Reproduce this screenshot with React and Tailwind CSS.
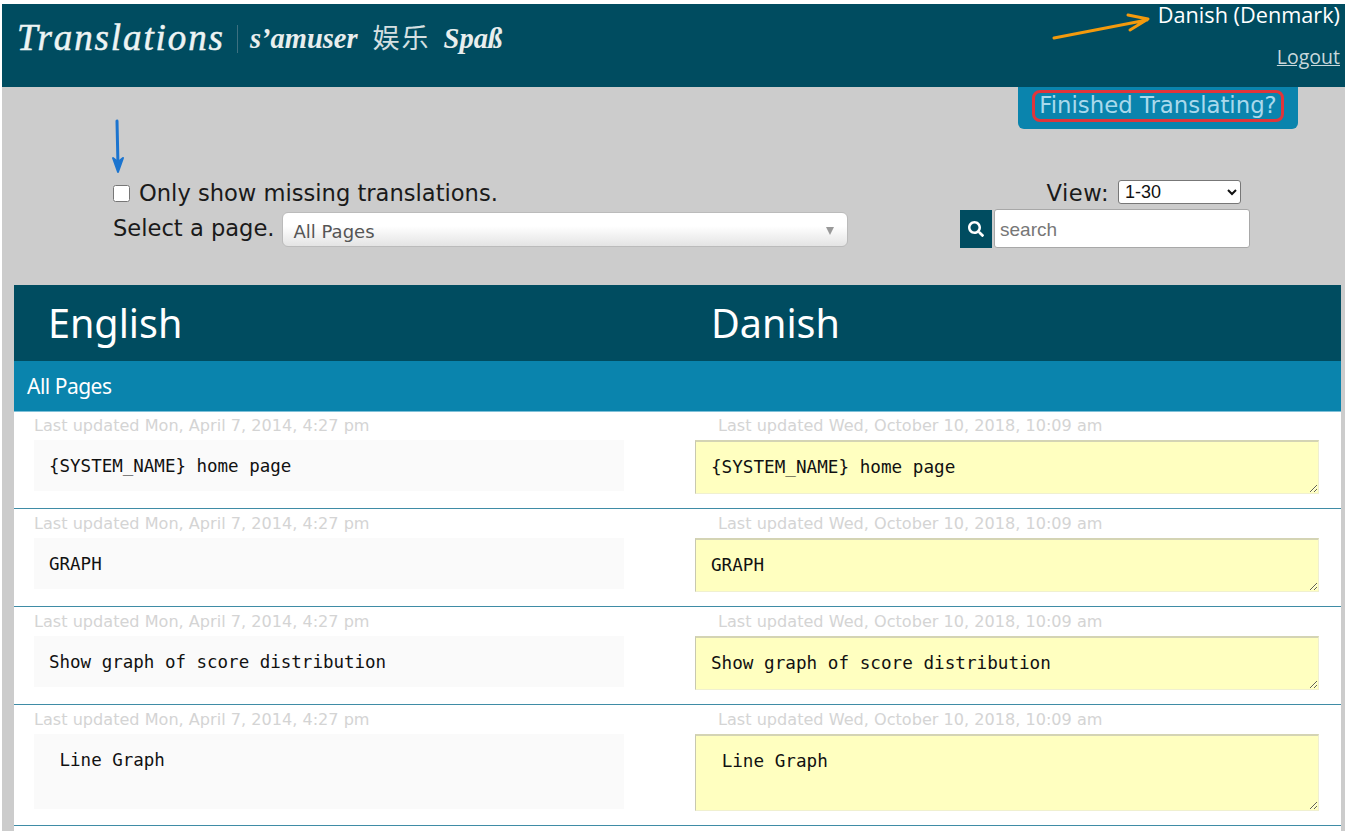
import React from 'react';
import { FaSearch } from 'react-icons/fa';

const OLD_DATE = 'Last updated Mon, April 7, 2014, 4:27 pm';
const NEW_DATE = 'Last updated Wed, October 10, 2018, 10:09 am';

const rows = [
  { text: '{SYSTEM_NAME} home page' },
  { text: 'GRAPH' },
  { text: 'Show graph of score distribution' },
  { text: ' Line Graph', tall: true },
];

const Row = ({ text, tall }) => (
  <div className={`grid grid-cols-[681px_1fr] border-b border-[#3f8ca6] bg-white ${tall ? 'h-[121px]' : 'h-[98px]'}`}>
    <div className="pl-[20px] pt-[6px]">
      <div className="font-['DejaVu_Sans'] text-[16.1px] leading-[18px] text-[#d4d4d4]">{OLD_DATE}</div>
      <div className={`mt-[5px] w-[590px] bg-[#fafafa] pl-[15px] pt-[14px] ${tall ? 'h-[75px]' : 'h-[51px]'}`}>
        <pre className="font-['DejaVu_Sans_Mono'] text-[17.5px] leading-[24px] text-[#111]">{text}</pre>
      </div>
    </div>
    <div className="pt-[6px]">
      <div className="pl-[23px] font-['DejaVu_Sans'] text-[16.1px] leading-[18px] text-[#d4d4d4]">{NEW_DATE}</div>
      <textarea
        readOnly
        value={text}
        className={`mt-[5px] block w-[624px] border border-[#f0f0d0] border-t-2 border-t-[#d4d4b4] border-l-[#c8c8b0] bg-[#ffffc0] px-[15px] pt-[13px] font-['DejaVu_Sans_Mono'] text-[17.65px] leading-[24px] text-[#111] outline-none ${tall ? 'h-[77px]' : 'h-[54px]'}`}
      />
    </div>
  </div>
);

export default function App() {
  return (
    <div className="relative h-[831px] w-[1353px] overflow-hidden bg-white pl-[2px] pr-[8px] pt-[4px]">
      <div className="h-[827px] bg-[#cccccc]">
        {/* top bar */}
        <header className="flex h-[83px] justify-between bg-[#004c60] pl-[15px] pr-[5px] text-white">
          <div className="flex items-start pt-[11px] font-['Liberation_Serif','Noto_Sans_CJK_SC',serif]">
            <span className="text-[37px] italic leading-[46px] tracking-[1.9px] text-[#eef4f4] [-webkit-text-stroke:0.5px_#eef4f4]">Translations</span>
            <span className="ml-[12px] mt-[10px] h-[28px] w-px bg-[#3d7080]" />
            <span className="ml-[12px] mt-[4px] text-[28.5px] font-bold italic leading-[40px] text-[#e8eeee]">s’amuser</span>
            <span className="ml-[15px] mt-[4px] text-[27px] leading-[40px] tracking-[2px] text-[#d5e0e2]">娱乐</span>
            <span className="ml-[13px] mt-[4px] text-[28.5px] font-bold italic leading-[40px] text-[#e8eeee]">Spaß</span>
          </div>
          <div className="flex flex-col items-end font-['Open_Sans']">
            <span className="text-[21.7px] leading-[22px]">Danish (Denmark)</span>
            <a className="mt-[20px] text-[19.5px] leading-[22px] text-[#c8d8dc] underline">Logout</a>
          </div>
        </header>

        <div className="flex justify-end pr-[47px]">
          <div className="h-[42px] w-[280px] rounded-b-[6px] bg-[#0a84ad] px-[14px] pt-[3px]">
            <div className="h-[32px] rounded-[8px] border-[3px] border-[#e0353a] text-center font-['DejaVu_Sans'] text-[22.8px] leading-[24px] text-[#a9d9ec]">
              Finished Translating?
            </div>
          </div>
        </div>

        {/* filters */}
        <div className="flex h-[156px] justify-between pl-[111px] pr-[95px] font-['DejaVu_Sans'] text-[22.6px] text-[#1a1a1a]">
          <div className="pt-[52px]">
            <label className="flex h-[24px] items-center">
              <input type="checkbox" className="h-[17px] w-[17px]" />
              <span className="ml-[9px] leading-[24px]">Only show missing translations.</span>
            </label>
            <div className="mt-[9px] flex items-start">
              <span className="pt-[2px] leading-[24px]">Select a page.</span>
              <div className="-mt-[2px] ml-[7px] flex h-[35px] w-[566px] items-center justify-between rounded-[6px] border border-[#bbbbbb] bg-gradient-to-b from-white from-40% to-[#e4e4e4] pl-[11px] pr-[13px] pt-[3px] text-[18px] text-[#555555]">
                <span>All Pages</span>
                <span className="h-0 w-0 border-x-[4px] border-t-[8px] border-x-transparent border-t-[#999999]" />
              </div>
            </div>
          </div>
          <div className="flex flex-col items-end pt-[51px]">
            <div className="mr-[9px] flex h-[24px] items-center">
              <span className="pt-[2px] leading-[24px] tracking-[0.5px]">View:</span>
              <select className="ml-[9px] h-[24px] w-[123px] rounded-[3px] border border-[#777777] bg-white pl-[2px] font-['Liberation_Sans'] text-[18px] leading-[20px] text-[#111]">
                <option>1-30</option>
              </select>
            </div>
            <div className="mt-[5px] flex h-[40px]">
              <div className="mt-px flex h-[38px] w-[32px] items-center justify-center bg-[#004c60] text-white">
                <FaSearch className="h-[16px] w-[16px]" />
              </div>
              <input
                placeholder="search"
                className="ml-[2px] h-[39px] w-[256px] rounded-[3px] border border-[#a8a8a8] bg-white pl-[5px] pt-[2px] font-['Liberation_Sans'] text-[19px] text-[#111] outline-none placeholder:text-[#777777]"
              />
            </div>
          </div>
        </div>

        {/* translations table */}
        <div className="ml-[12px] mr-[4px]">
          <div className="grid h-[76px] grid-cols-[663px_1fr] bg-[#004c60] pl-[34px] font-['Noto_Sans'] text-[39.5px] leading-[76px] text-white">
            <span>English</span>
            <span>Danish</span>
          </div>
          <div className="relative z-10 -mb-px h-[51px] border-b border-[#7fc0d8] bg-[#0a84ad] pl-[13px] font-['Noto_Sans'] text-[21px] leading-[50px] tracking-[-0.5px] text-white">
            All Pages
          </div>
          {rows.map((row) => (
            <Row key={row.text} {...row} />
          ))}
          <div className="h-[20px] bg-white" />
        </div>
      </div>

      {/* annotation arrows */}
      <svg className="absolute left-0 top-0 z-20 h-[200px] w-[1353px]" viewBox="0 0 1353 200" fill="none" strokeLinecap="round" strokeLinejoin="round">
        <path d="M1054 38 L1147 20 M1128 15 L1148 19 L1130 30" stroke="#f39a0d" strokeWidth="3" />
        <path d="M117 121 L118 166" stroke="#1b74cf" strokeWidth="3" />
        <path d="M113 158 L118 172 L123 158 L118 162 Z" fill="#1b74cf" stroke="#1b74cf" strokeWidth="2" />
      </svg>
    </div>
  );
}
